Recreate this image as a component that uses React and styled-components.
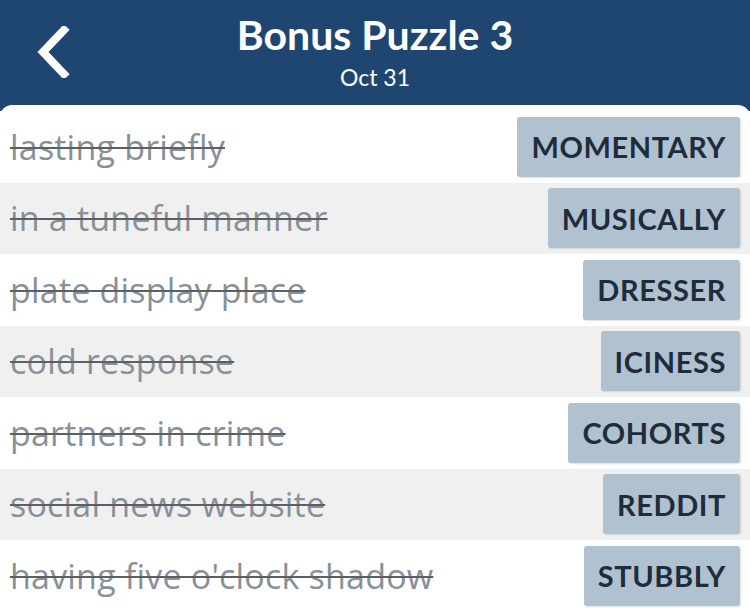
import styled, { createGlobalStyle } from "styled-components";

const GlobalStyle = createGlobalStyle`
  html, body {
    margin: 0;
    padding: 0;
    background: #1f4670;
  }
  body {
    font-family: Lato, "Open Sans", sans-serif;
  }
`;

const clues = [
  { clue: "lasting briefly", answer: "MOMENTARY" },
  { clue: "in a tuneful manner", answer: "MUSICALLY" },
  { clue: "plate display place", answer: "DRESSER" },
  { clue: "cold response", answer: "ICINESS" },
  { clue: "partners in crime", answer: "COHORTS" },
  { clue: "social news website", answer: "REDDIT" },
  { clue: "having five o'clock shadow", answer: "STUBBLY" },
];

const App = () => {
  return (
    <Screen>
      <GlobalStyle />
      <Header>
        <BackButton type="button" aria-label="Back">
          <svg width="36" height="52" viewBox="0 0 36 52">
            <path
              d="M29 4 L8 26 L29 48"
              fill="none"
              stroke="#fff"
              strokeWidth="8"
              strokeLinecap="square"
              strokeLinejoin="miter"
            />
          </svg>
        </BackButton>
        <Title>Bonus Puzzle 3</Title>
        <Subtitle>Oct 31</Subtitle>
      </Header>
      <List>
        {clues.map((item, index) => {
          return (
            <Row key={index} $striped={index % 2 === 1}>
              <Clue>{item.clue}</Clue>
              <Answer>{item.answer}</Answer>
            </Row>
          );
        })}
      </List>
    </Screen>
  );
};

const Screen = styled.div`
  width: 750px;
  height: 611px;
  overflow: hidden;
  background: #1f4670;
`;

const Header = styled.header`
  position: relative;
  height: 105px;
  display: flex;
  flex-direction: column;
  align-items: center;
  padding-top: 10px;
  box-sizing: border-box;
  color: #fff;
`;

const BackButton = styled.button`
  position: absolute;
  left: 35px;
  top: 26px;
  background: none;
  border: none;
  padding: 0;
  cursor: pointer;
`;

const Title = styled.h1`
  margin: 0;
  font-family: Lato, sans-serif;
  font-weight: 700;
  font-size: 41px;
  line-height: 50px;
`;

const Subtitle = styled.div`
  font-family: Lato, sans-serif;
  font-size: 23px;
  line-height: 28px;
  margin-top: 3px;
`;

const List = styled.section`
  background: #fff;
  border-radius: 12px 12px 0 0;
  padding-top: 6px;
  height: 506px;
  box-sizing: border-box;
`;

const Row = styled.div`
  height: 71.5px;
  display: flex;
  align-items: center;
  justify-content: space-between;
  padding: 0 10px;
  background: ${(p) => (p.$striped ? "#f0f0f0" : "#fff")};
`;

const Clue = styled.span`
  font-family: "Open Sans", sans-serif;
  font-size: 34px;
  letter-spacing: 0.2px;
  color: #8a9097;
  text-decoration: line-through;
  text-decoration-color: #5b6067;
  text-decoration-thickness: 2px;
  white-space: nowrap;
`;

const Answer = styled.span`
  display: flex;
  align-items: center;
  height: 60px;
  padding: 0 14px;
  border-radius: 3px;
  background: #b0c1cf;
  box-shadow: 1px 1px 2px rgba(0, 0, 0, 0.12);
  color: #1f2c3b;
  font-family: Lato, sans-serif;
  font-weight: 700;
  font-size: 29px;
  letter-spacing: 0.6px;
`;

export default App;
